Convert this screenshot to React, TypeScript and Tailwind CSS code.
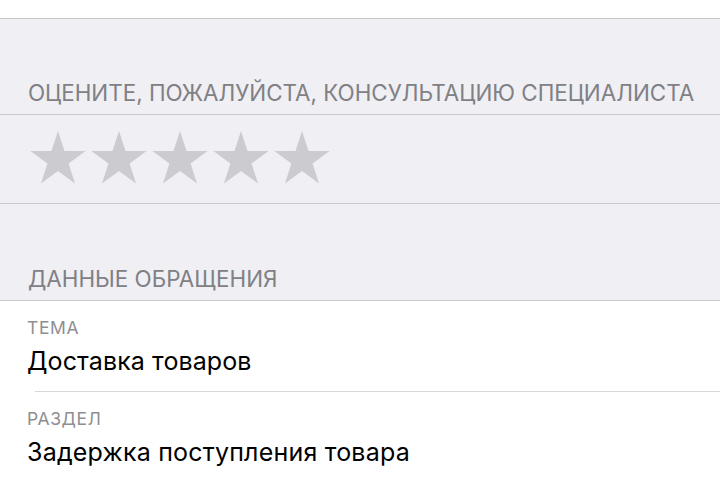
import React from "react";

const Star = () => (
  <svg width="58" height="56" viewBox="-29 -29 58 56" className="block">
    <polygon
      fill="#cbcbd0"
      points={Array.from({ length: 10 })
        .map((_, i) => {
          const r = i % 2 === 0 ? 29 : 11.1;
          const a = (Math.PI / 5) * i - Math.PI / 2;
          return `${(r * Math.cos(a)).toFixed(2)},${(r * Math.sin(a)).toFixed(2)}`;
        })
        .join(" ")}
    />
  </svg>
);

export default function App() {
  return (
    <div
      className="w-[720px] h-[480px] overflow-hidden bg-[#efeff4] flex flex-col"
      style={{ fontFamily: "Inter, 'Noto Sans', sans-serif" }}
    >
      <div className="h-[19px] bg-white border-b border-[#c8c7cc] shrink-0" />
      <div className="h-[96px] shrink-0 flex items-end pl-[28px] pb-[8px] border-b border-[#c8c7cc]">
        <span className="text-[22.4px] leading-[26px] text-[#808085] whitespace-nowrap">
          ОЦЕНИТЕ, ПОЖАЛУЙСТА, КОНСУЛЬТАЦИЮ СПЕЦИАЛИСТА
        </span>
      </div>
      <div className="h-[89px] shrink-0 flex items-center pl-[29px] gap-[3px] border-b border-[#c8c7cc]">
        <Star />
        <Star />
        <Star />
        <Star />
        <Star />
      </div>
      <div className="h-[97px] shrink-0 flex items-end pl-[28px] pb-[8px] border-b border-[#c8c7cc]">
        <span className="text-[22.4px] leading-[26px] text-[#808085] whitespace-nowrap">
          ДАННЫЕ ОБРАЩЕНИЯ
        </span>
      </div>
      <div className="bg-white flex-1 flex flex-col">
        <div className="pl-[27px] pt-[16px] pb-[15px]">
          <div className="text-[17.5px] leading-[22px] text-[#8e8e93] tracking-[0.6px]">ТЕМА</div>
          <div className="mt-[7px] text-[25px] leading-[30px] text-black tracking-[0.1px]">Доставка товаров</div>
        </div>
        <div className="ml-[35px] h-px bg-[#d8d8dc]" />
        <div className="pl-[27px] pt-[16px]">
          <div className="text-[17.5px] leading-[22px] text-[#8e8e93] tracking-[0.6px]">РАЗДЕЛ</div>
          <div className="mt-[7px] text-[25px] leading-[30px] text-black tracking-[0.2px]">Задержка поступления товара</div>
        </div>
      </div>
    </div>
  );
}
